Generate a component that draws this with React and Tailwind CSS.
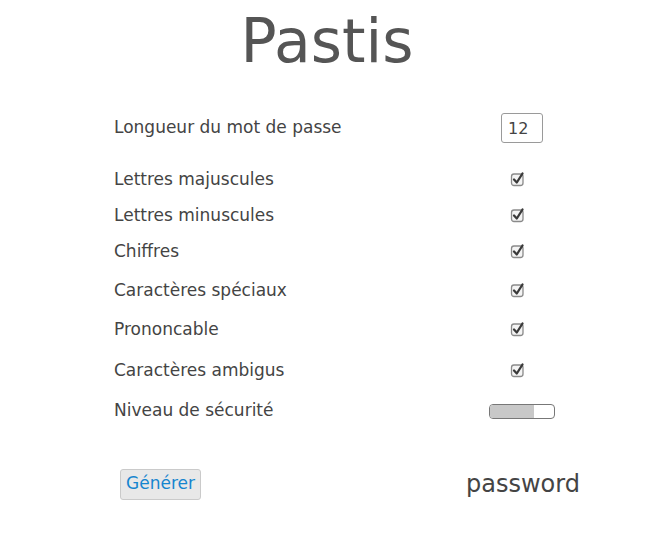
const options = [
  { label: "Lettres majuscules", mt: "mt-[16px]" },
  { label: "Lettres minuscules", mt: "mt-0" },
  { label: "Chiffres", mt: "mt-0" },
  { label: "Caractères spéciaux", mt: "mt-[3px]" },
  { label: "Prononcable", mt: "mt-[3px]" },
  { label: "Caractères ambigus", mt: "mt-[5px]" },
];

function CheckIcon() {
  return (
    <svg width="16" height="16" viewBox="0 0 16 16" className="block -mt-[2px]">
      <rect x="1.5" y="3" width="11.5" height="11.5" rx="2.5" fill="#f4f4f4" stroke="#8a8a8a" strokeWidth="1.3" />
      <path d="M4 8.5 L6.8 11.5 L12.5 2.5" fill="none" stroke="#3a3a3a" strokeWidth="2.3" strokeLinecap="round" strokeLinejoin="round" />
    </svg>
  );
}

export default function App() {
  return (
    <div className="w-[654px] h-[538px] bg-white text-[#444] font-['DejaVu_Sans',Verdana,sans-serif]">
      {/* title */}
      <h1 className="pt-[11px] text-center text-[60px] leading-[60px] text-[#555]">Pastis</h1>

      <div className="mt-[39px] pl-[114px] text-[17px]">
        <div className="flex items-center h-[36px]">
          <span className="w-[387px]">Longueur du mot de passe</span>
          <input
            type="text"
            defaultValue="12"
            className="w-[42px] h-[30px] border border-[#9a9a9a] rounded-[3px] px-[6px] text-[16px] text-[#444] outline-none"
          />
        </div>

        {options.map(o => (
          <div key={o.label} className={`flex items-center h-[36px] ${o.mt}`}>
            <span className="w-[396px]">{o.label}</span>
            <CheckIcon />
          </div>
        ))}

        <div className="flex items-center h-[36px] mt-[4px]">
          <span className="w-[375px]">Niveau de sécurité</span>
          <div className="w-[66px] h-[15px] border-[1.5px] border-[#777] rounded-[4px] bg-white overflow-hidden">
            <div className="w-[44px] h-full bg-[#c8c8c8]" />
          </div>
        </div>
      </div>

      <div className="mt-[37px] pl-[120px] flex items-center">
        <button className="w-[81px] h-[31px] bg-[#e8e8e8] border border-[#cacaca] rounded-[3px] text-[17px] text-[#1585cf]">
          Générer
        </button>
        <span className="ml-[265px] text-[24px] text-[#444]">password</span>
      </div>
    </div>
  );
}
